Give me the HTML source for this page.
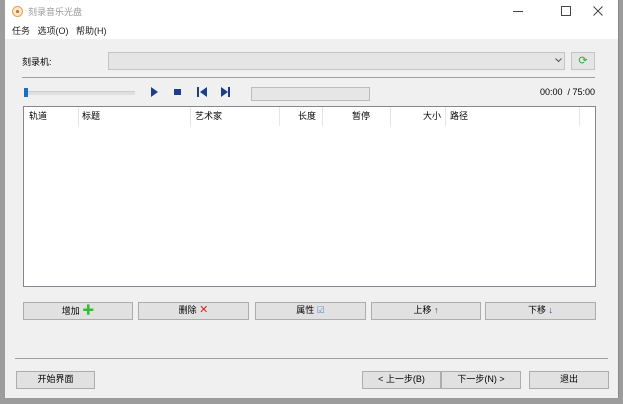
<!DOCTYPE html><html><head><meta charset="utf-8"><style>
body{margin:0;width:623px;height:404px;background:#9c9c9c;position:relative;overflow:hidden;font-family:"Liberation Sans","Noto Sans CJK SC",sans-serif;font-size:9px;color:#000}
.a{position:absolute}
.win{left:5px;top:0;width:613px;height:398px;background:#f0f0f0;border-right:1px solid #888}
.top{left:5px;top:0;width:613px;height:39px;background:#fff}
.btn{position:absolute;background:#e1e1e1;border:1px solid #adadad;box-sizing:border-box;text-align:center;line-height:15px;font-size:9px}
.hd{position:absolute;top:106px;height:20px;line-height:20px;font-size:9px}
.dv{position:absolute;top:107px;width:1px;height:19px;background:#e5e5e5}
</style></head><body>
<div class="a win"></div>
<div class="a top"></div>
<div class="a" style="left:12px;top:6px;width:9px;height:9px;border-radius:50%;border:1px solid #e8a050;background:#fbe8d0"></div>
<div class="a" style="left:16px;top:10px;width:3px;height:3px;border-radius:50%;background:#c07020"></div>
<div class="a" style="left:28px;top:5px;color:#999;font-size:9px">刻录音乐光盘</div>
<div class="a" style="left:513px;top:11px;width:10px;height:1px;background:#444"></div>
<div class="a" style="left:561px;top:6px;width:8px;height:8px;border:1px solid #444"></div>
<svg class="a" style="left:593px;top:6px" width="10" height="10"><path d="M0.5 0.5L9.5 9.5M9.5 0.5L0.5 9.5" stroke="#444" stroke-width="1"/></svg>
<div class="a" style="left:12px;top:24px;font-size:9px;color:#222">任务 &nbsp;&nbsp;选项(O) &nbsp;&nbsp;帮助(H)</div>
<div class="a" style="left:22px;top:55px">刻录机:</div>
<div class="a" style="left:108px;top:52px;width:457px;height:18px;background:#e5e5e5;border:1px solid #c4c4c4;box-sizing:border-box"></div>
<svg class="a" style="left:555px;top:58px" width="7" height="5"><path d="M0.5 0.5L3.5 3.5L6.5 0.5" stroke="#555" fill="none"/></svg>
<div class="a" style="left:571px;top:52px;width:24px;height:18px;background:#e5e5e5;border:1px solid #c4c4c4;box-sizing:border-box;text-align:center;color:#3a3;font-size:11px;line-height:16px">⟳</div>
<div class="a" style="left:22px;top:77px;width:573px;height:1px;background:#a0a0a0"></div>
<div class="a" style="left:24px;top:91px;width:111px;height:3px;background:#e0e0e0;border-top:1px solid #ccc"></div>
<div class="a" style="left:24px;top:88px;width:4px;height:9px;background:#1a6fc0"></div>
<svg class="a" style="left:148px;top:85px" width="90" height="14">
<polygon points="3,2 10,7 3,12" fill="#1c3f8a"/>
<rect x="26" y="4" width="7" height="6" fill="#1c3f8a"/>
<rect x="49" y="2" width="2" height="10" fill="#1c3f8a"/><polygon points="59,2 52,7 59,12" fill="#1c3f8a"/>
<polygon points="73,2 80,7 73,12" fill="#1c3f8a"/><rect x="80" y="2" width="2" height="10" fill="#1c3f8a"/>
</svg>
<div class="a" style="left:251px;top:87px;width:119px;height:14px;background:#e6e6e6;border:1px solid #bcbcbc;box-sizing:border-box"></div>
<div class="a" style="left:530px;top:87px;width:65px;text-align:right;font-size:9px">00:00 &nbsp;/ 75:00</div>
<div class="a" style="left:23px;top:106px;width:573px;height:181px;background:#fff;border:1px solid #828790;box-sizing:border-box"></div>
<div class="hd" style="left:29px">轨道</div><div class="dv" style="left:78px"></div>
<div class="hd" style="left:82px">标题</div><div class="dv" style="left:190px"></div>
<div class="hd" style="left:195px">艺术家</div><div class="dv" style="left:279px"></div>
<div class="hd" style="left:298px">长度</div><div class="dv" style="left:322px"></div>
<div class="hd" style="left:352px">暂停</div><div class="dv" style="left:390px"></div>
<div class="hd" style="left:423px">大小</div><div class="dv" style="left:445px"></div>
<div class="hd" style="left:450px">路径</div><div class="dv" style="left:579px"></div>
<div class="btn" style="left:23px;top:302px;width:110px;height:18px">增加 <span style="color:#3b3;font-weight:bold;font-size:12px">✚</span></div>
<div class="btn" style="left:138px;top:302px;width:111px;height:18px">删除 <span style="color:#d22;font-size:11px">✕</span></div>
<div class="btn" style="left:255px;top:302px;width:111px;height:18px">属性 <span style="color:#58c">☑</span></div>
<div class="btn" style="left:371px;top:302px;width:110px;height:18px">上移 <span style="color:#1c4a9a;font-weight:bold">↑</span></div>
<div class="btn" style="left:485px;top:302px;width:111px;height:18px">下移 <span style="color:#1c4a9a;font-weight:bold">↓</span></div>
<div class="a" style="left:15px;top:358px;width:593px;height:1px;background:#a0a0a0"></div>
<div class="btn" style="left:16px;top:371px;width:79px;height:18px">开始界面</div>
<div class="btn" style="left:362px;top:371px;width:79px;height:18px">&lt; 上一步(B)</div>
<div class="btn" style="left:441px;top:371px;width:80px;height:18px">下一步(N) &gt;</div>
<div class="btn" style="left:529px;top:371px;width:80px;height:18px">退出</div>
</body></html>
